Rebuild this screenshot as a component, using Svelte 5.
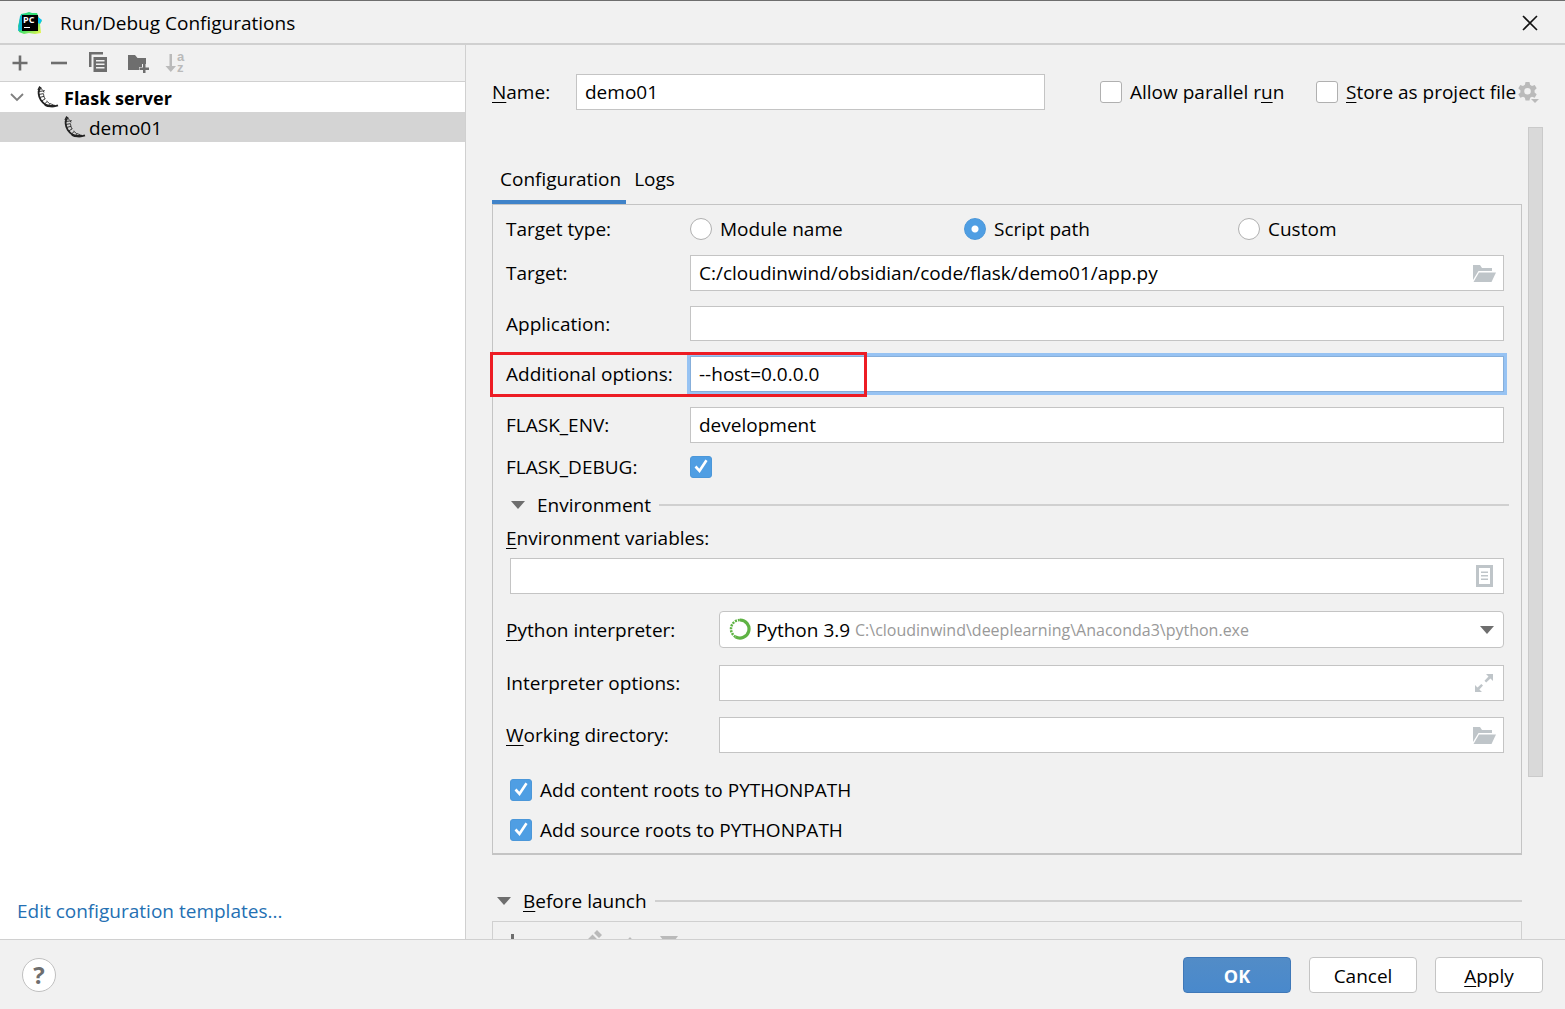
<script lang="ts">
  let name = $state("demo01");
  let targetType = $state("script");
  let target = $state("C:/cloudinwind/obsidian/code/flask/demo01/app.py");
  let options = $state("--host=0.0.0.0");
  let flaskEnv = $state("development");

  const targetTypes = [
    { key: "module", label: "Module name" },
    { key: "script", label: "Script path" },
    { key: "custom", label: "Custom" },
  ];
</script>

{#snippet flask()}
  <svg class="flask" width="24" height="24" viewBox="0 0 24 24" fill="none" stroke="#222" aria-hidden="true">
    <path d="M4 3.500C1.800 6 2.300 11 4.800 15c2.700 4 6.700 5.800 9.200 6.200 3 .4 6-.2 8-.9" stroke-width="1.800" />
    <path d="M4 3.500l2.500 1M7 5.500l1 2M7.500 9l.6 3 1 2M10.500 16l3 2.500 4 1.300" stroke-width=".8" />
    <path d="M2.800 6.500l6-.8M2.600 9.500l5-.9M3.500 12.500l4.500-1.200M5.500 16l3.800-2.200M8.500 19l2.800-2.600M12 21l2-2.500" stroke-width=".9" />
    <path d="M9 19.800c3 1.700 6 1.700 10 1" stroke-width="2.200" />
    <path d="M2 5l1.500-3 2 1.500" stroke-width="1.300" />
  </svg>
{/snippet}

{#snippet folder()}
  <svg class="field-icon" width="24" height="20" viewBox="0 0 24 20" fill="#bfc5c9" aria-hidden="true">
    <path d="M1 16V1h7l2 3h10v3H6.500L1 16z" />
    <path d="M7 8.500h17L19.500 18H1.500z" />
  </svg>
{/snippet}

{#snippet triangle()}
  <svg width="14" height="8" viewBox="0 0 14 8" fill="#6e6e6e" aria-hidden="true"><path d="M0 0h14L7 8z" /></svg>
{/snippet}

<div class="dialog">
  <header class="titlebar">
    <svg width="26" height="24" viewBox="0 0 26 24" aria-hidden="true">
      <defs>
        <linearGradient id="logo" x1="0" y1="0" x2="1" y2="1">
          <stop offset="0" stop-color="#21d789" />
          <stop offset=".5" stop-color="#3be06c" />
          <stop offset="1" stop-color="#fcf84a" />
        </linearGradient>
      </defs>
      <path d="M4 3l5-1 3-1 3 1h5l2 5 3 3-2 3 1 9-6 1-6-1-5 1-5-2-1-6z" fill="url(#logo)" />
      <path d="M3 5l4-2-2 8v8l-4 1z" fill="#12b6cf" />
      <path d="M21 6l4 3-2 4-2-1z" fill="#07c3f2" />
      <rect x="5" y="4" width="16" height="16" fill="#000" />
      <text x="6" y="12" font-size="9" font-weight="700" fill="#fff" font-family="Open Sans, sans-serif">PC</text>
      <rect x="7" y="16" width="6" height="1" fill="#fff" />
    </svg>
    <h1>Run/Debug Configurations</h1>
    <button class="icon-button" aria-label="Close">
      <svg width="16" height="16" viewBox="0 0 16 16" stroke="#111" stroke-width="1.600"><path d="M1 1l14 14M15 1L1 15" /></svg>
    </button>
  </header>

  <div class="body">
    <aside class="sidebar">
      <div class="toolbar">
        <button class="icon-button" aria-label="Add">
          <svg width="16" height="16" viewBox="0 0 16 16" fill="#6e6e6e"><path d="M6.700.5h2.600v6.200h6.200v2.600H9.300v6.200H6.700V9.300H.5V6.700h6.200z" /></svg>
        </button>
        <button class="icon-button" aria-label="Remove">
          <svg width="16" height="16" viewBox="0 0 16 16" fill="#6e6e6e"><path d="M0 6.700h16v2.600H0z" /></svg>
        </button>
        <button class="icon-button" aria-label="Copy">
          <svg width="20" height="22" viewBox="0 0 20 22" fill="#6e6e6e">
            <path d="M1 0h14v2.500H3.500V15H1z" />
            <path fill-rule="evenodd" d="M5.500 5H19v15H5.500zM8 8v1.500h8.500V8zm0 3.500V13h8.500v-1.500zM8 15v1.500h8.500V15z" />
          </svg>
        </button>
        <button class="icon-button" aria-label="New folder">
          <svg width="22" height="20" viewBox="0 0 22 20" fill="#6e6e6e">
            <path d="M1 2h7l2.500 3H19v6h-4v3h-3v3H1z" />
            <path d="M16 11h2.500v3.500H22V17h-3.500v3.500H16V17h-3.500v-2.500H16z" />
          </svg>
        </button>
        <button class="icon-button sort" aria-label="Sort alphabetically" disabled>
          <svg width="22" height="26" viewBox="0 0 22 26" fill="#bababa">
            <path d="M4.500 4H7v12h4l-5.200 6L.5 16h4z" />
            <text x="12" y="11" font-size="13" font-weight="700" font-family="Liberation Sans, sans-serif">a</text>
            <text x="12" y="22" font-size="13" font-weight="700" font-family="Liberation Sans, sans-serif">z</text>
          </svg>
        </button>
      </div>
      <ul class="tree">
        <li class="group">
          <svg width="14" height="9" viewBox="0 0 14 9" fill="none" stroke="#7f7f7f" stroke-width="1.800" aria-hidden="true"><path d="M1 1l6 6 6-6" /></svg>
          {@render flask()}
          <span>Flask server</span>
        </li>
        <li class="item selected">
          {@render flask()}
          <span>demo01</span>
        </li>
      </ul>
      <a class="templates" href="#templates">Edit configuration templates...</a>
    </aside>

    <main class="editor">
      <div class="name-row">
        <label for="name"><u>N</u>ame:</label>
        <div class="name-field"><input id="name" type="text" bind:value={name} /></div>
        <label class="check"><input type="checkbox" /><span>Allow parallel r<u>u</u>n</span></label>
        <div class="store">
          <label class="check"><input type="checkbox" /><span><u>S</u>tore as project file</span></label>
          <button class="icon-button" aria-label="Storage settings">
            <svg width="22" height="22" viewBox="0 0 22 22" fill="#bababa">
              <path fill-rule="evenodd" d="M7.500 1h4l.6 2.800 1.900 1.100 2.700-1 2 3.400-2.100 1.900v2.200l2.100 1.900-2 3.400-2.700-1-1.900 1.100-.6 2.800h-4l-.6-2.800L5 15.700l-2.700 1-2-3.400 2.100-1.900V9.200L.3 7.300l2-3.400 2.700 1 1.900-1.100zM9.500 7a3.300 3.300 0 1 0 0 6.600 3.300 3.300 0 0 0 0-6.600z" />
              <path d="M12 17h10l-5 5z" fill="#f1f1f1" />
              <path d="M13 18h8l-4 4z" />
            </svg>
          </button>
        </div>
      </div>

      <div class="viewport">
        <div class="content">
          <div class="tabs" role="tablist">
            <button role="tab" class="tab active" aria-selected="true">Configuration</button>
            <button role="tab" class="tab" aria-selected="false">Logs</button>
          </div>

          <section class="panel">
            <div class="row types" role="radiogroup" aria-label="Target type">
              <span>Target type:</span>
              <div class="radios">
                {#each targetTypes as type}
                  <label class="check">
                    <input type="radio" name="target-type" value={type.key} bind:group={targetType} />
                    <span>{type.label}</span>
                  </label>
                {/each}
              </div>
            </div>
            <div class="row target">
              <label for="target">Target:</label>
              <div class="field"><input id="target" type="text" bind:value={target} />{@render folder()}</div>
            </div>
            <div class="row">
              <label for="application">Application:</label>
              <input id="application" class="short" type="text" />
            </div>
            <div class="row marked">
              <label for="options">Additional options:</label>
              <input id="options" class="focused" type="text" bind:value={options} />
            </div>
            <div class="row">
              <label for="env">FLASK_ENV:</label>
              <input id="env" type="text" bind:value={flaskEnv} />
            </div>
            <div class="row debug">
              <label for="debug">FLASK_DEBUG:</label>
              <input id="debug" type="checkbox" checked />
            </div>

            <div class="separator environment">{@render triangle()}<h2>Environment</h2></div>

            <label class="variables-label" for="variables"><u>E</u>nvironment variables:</label>
            <div class="field variables">
              <input id="variables" type="text" />
              <svg class="field-icon list-icon" width="17" height="22" viewBox="0 0 17 22" fill="#bfc5c9" aria-hidden="true">
                <path fill-rule="evenodd" d="M0 0h17v22H0zM3 3v16h11V3z" />
                <path d="M5 6.500h7V8H5zM5 10h7v1.500H5zM5 13.500h7V15H5z" />
              </svg>
            </div>

            <div class="row wide">
              <label for="interpreter"><u>P</u>ython interpreter:</label>
              <div class="combo">
                <select id="interpreter"><option>Python 3.9</option></select>
                <svg class="ring" width="22" height="22" viewBox="0 0 22 22" fill="none" stroke="#5fb344" aria-hidden="true">
                  <path d="M11 2a9 9 0 1 1-4.500 16.800" stroke-width="3.200" />
                  <path d="M6.500 18.800A9 9 0 0 1 11 2" stroke-width="2.500" stroke-dasharray="2 1" />
                </svg>
                <span class="path">C:\cloudinwind\deeplearning\Anaconda3\python.exe</span>
                <span class="arrow">{@render triangle()}</span>
              </div>
            </div>
            <div class="row wide">
              <label for="interpreter-options">Interpreter options:</label>
              <div class="field">
                <input id="interpreter-options" type="text" />
                <svg class="field-icon" width="24" height="20" viewBox="0 0 24 20" fill="#bfc5c9" aria-hidden="true">
                  <path d="M14 0h7v7l-2.500-2.500-4.300 4-1.700-1.700 4-4.300zM3 18v-7l2.500 2.500 3.800-3.600 1.700 1.700-3.600 3.900L10 18z" />
                </svg>
              </div>
            </div>
            <div class="row wide directory">
              <label for="directory"><u>W</u>orking directory:</label>
              <div class="field"><input id="directory" type="text" />{@render folder()}</div>
            </div>

            <div class="roots">
              <label class="check"><input type="checkbox" checked /><span>Add content roots to PYTHONPATH</span></label>
              <label class="check"><input type="checkbox" checked /><span>Add source roots to PYTHONPATH</span></label>
            </div>
          </section>

          <div class="separator launch">{@render triangle()}<h2><u>B</u>efore launch</h2></div>
          <div class="tasks">
            <button class="icon-button" aria-label="Add task">
              <svg width="16" height="16" viewBox="0 0 16 16" fill="#6e6e6e"><path d="M6 0h3v7h7v3H9v6H6v-6H0V7h6z" /></svg>
            </button>
            <button class="icon-button" aria-label="Remove task" disabled>
              <svg width="16" height="2" viewBox="0 0 16 2" fill="#bababa"><path d="M0 0h16v2H0z" /></svg>
            </button>
            <button class="icon-button" aria-label="Edit task" disabled>
              <svg width="22" height="24" viewBox="0 0 22 24" fill="#bababa"><path d="M17 0l5 5-3 3-5-5zM12.500 4.500l5 5L6 21H1v-5z" /></svg>
            </button>
            <button class="icon-button" aria-label="Move up" disabled>
              <svg width="18" height="10" viewBox="0 0 18 10" fill="#bababa"><path d="M9 0l9 10H0z" /></svg>
            </button>
            <button class="icon-button" aria-label="Move down" disabled>
              <svg width="18" height="12" viewBox="0 0 18 12" fill="#bababa"><path d="M0 0h18L9 12z" /></svg>
            </button>
          </div>
        </div>
        <div class="scrollbar"></div>
      </div>
    </main>
  </div>

  <footer class="actions">
    <button class="help" aria-label="Help">?</button>
    <button class="button primary">OK</button>
    <button class="button">Cancel</button>
    <button class="button"><u>A</u>pply</button>
  </footer>
</div>

<style>
  :global(body) { margin: 0; }
  .dialog {
    display: flex;
    flex-direction: column;
    height: 100vh;
    box-sizing: border-box;
    border-top: 1px solid #6e6e6e;
    background: #f1f1f1;
    color: #000;
    font: 19px/24px "Open Sans", "Noto Sans", sans-serif;
  }
  .dialog *, .marked::after { box-sizing: border-box; }
  h1, h2 { margin: 0; font-size: inherit; font-weight: 400; }
  svg { display: block; flex: none; }
  u { text-underline-offset: 3px; text-decoration-thickness: 1px; text-decoration-skip-ink: none; }
  .icon-button {
    display: flex;
    align-items: center;
    justify-content: center;
    padding: 0;
    border: 0;
    background: none;
  }

  .titlebar {
    display: flex;
    align-items: center;
    height: 44px;
    padding: 2px 27px 0 17px;
    border-bottom: 2px solid #d0d0d0;
  }
  .titlebar h1 { flex: 1; padding-left: 17px; }
  .body { display: flex; flex: 1; min-height: 0; }

  /* Configuration tree */
  .sidebar {
    display: flex;
    flex-direction: column;
    flex: none;
    width: 466px;
    border-right: 1px solid #d0d0d0;
    background: #fff;
  }
  .toolbar {
    display: flex;
    align-items: center;
    gap: 19px;
    height: 37px;
    padding-left: 12px;
    border-bottom: 1px solid #d0d0d0;
    background: #f1f1f1;
  }
  .toolbar .icon-button:nth-child(2) { padding: 0 2px 0 4px; }
  .toolbar .sort { margin-left: -3px; }
  .tree { flex: 1; margin: 0; padding: 0; list-style: none; }
  .tree li { display: flex; align-items: center; height: 30px; }
  .tree span { padding-top: 2px; }
  .group { padding-left: 10px; font-size: 18px; font-weight: 700; }
  .group .flask { margin: 0 4px 0 12px; }
  .item { padding-left: 63px; }
  .item .flask { margin-right: 2px; }
  .selected { background: #d4d4d4; }
  .templates { padding: 0 17px 16px; color: #2470b3; text-decoration: none; }

  /* Text boxes, tick boxes and radios */
  input[type="text"], select {
    display: block;
    width: 100%;
    height: 36px;
    padding: 0 8px;
    border: 1px solid #c4c4c4;
    border-radius: 0;
    outline: 0;
    background: #fff;
    color: inherit;
    font: inherit;
  }
  input[type="text"].short { height: 35px; }
  input[type="text"].focused { border-color: #87afda; box-shadow: 0 0 0 3px #97c3f3; }
  input[type="checkbox"], input[type="radio"] {
    flex: none;
    appearance: none;
    width: 22px;
    height: 22px;
    margin: 0;
    border: 1px solid #b0b0b0;
    border-radius: 3px;
    background: #fff;
  }
  input[type="checkbox"]:checked {
    border-color: #4b97d9;
    background: #4f9ee3 url("data:image/svg+xml,%3Csvg xmlns='http://www.w3.org/2000/svg' viewBox='0 0 20 20' fill='none' stroke='white' stroke-width='2.600'%3E%3Cpath d='M4.500 9.500l4 4.300 7-10.500'/%3E%3C/svg%3E") center / 20px no-repeat;
  }
  input[type="radio"] { border-radius: 50%; }
  input[type="radio"]:checked {
    border-color: #4b97d9;
    background: radial-gradient(circle, #fff 0 3px, #4f9ee3 4px);
  }
  .check { display: flex; align-items: center; gap: 8px; white-space: nowrap; }
  .field { position: relative; flex: 1; }
  .field-icon { position: absolute; top: 9px; right: 8px; }
  .list-icon { top: 7px; right: 11px; }

  /* Right side */
  .editor { display: flex; flex-direction: column; flex: 1; min-width: 0; padding: 0 22px 0 26px; }
  .name-row {
    display: grid;
    grid-template-columns: 84px 1fr 216px 227px;
    align-items: center;
    flex: none;
    padding: 29px 0 17px;
  }
  .name-field { padding-right: 55px; }
  .store { display: flex; align-items: center; justify-content: space-between; padding-right: 3px; }
  .viewport {
    display: flex;
    flex: 1;
    gap: 6px;
    min-height: 0;
    overflow-x: visible;
    overflow-y: clip;
  }
  .content { flex: 1; min-width: 0; }
  .scrollbar { width: 15px; height: 80%; border: 1px solid #cacaca; background: #d9d9d9; }

  .tabs { display: flex; padding-top: 36px; }
  .tab {
    height: 41px;
    padding: 0 5px 5px 8px;
    border: 0;
    border-bottom: 4px solid transparent;
    background: none;
    color: inherit;
    font: inherit;
  }
  .tab.active { border-color: #4083c9; }
  .panel {
    display: flex;
    flex-direction: column;
    padding: 6px 17px 11px 13px;
    border: 1px solid #c4c4c4;
    border-bottom-width: 2px;
  }
  .row { display: grid; grid-template-columns: 184px 1fr; align-items: center; margin-top: 15px; }
  .row.types { height: 36px; margin-top: 0; }
  .row.target { margin-top: 8px; }
  .row.debug { margin-top: 12px; }
  .row.wide { grid-template-columns: 213px 1fr; margin-top: 17px; }
  .row.directory { margin-top: 16px; }
  .radios { display: grid; grid-template-columns: 1fr 1fr 1fr; margin-right: -8px; }
  /* Red callout round the option that has to be changed */
  .marked { position: relative; }
  .marked::after {
    content: "";
    position: absolute;
    top: -4px;
    left: -16px;
    width: 377px;
    height: 45px;
    border: 3px solid #ed1c24;
    pointer-events: none;
  }

  .separator { display: flex; align-items: center; gap: 12px; }
  .separator::after { content: ""; flex: 1; height: 2px; margin-left: -4px; background: #d0d0d0; }
  .environment { margin: 14px -5px 0 5px; }
  .variables-label { margin-top: 9px; }
  .variables { flex: none; margin: 8px 0 0 4px; }
  .combo { position: relative; }
  .combo select { appearance: none; height: 37px; padding-left: 36px; border-radius: 4px; }
  .ring { position: absolute; top: 7px; left: 10px; }
  .path { position: absolute; top: 7px; left: 136px; color: #999; font-size: 16px; }
  .arrow { position: absolute; top: 15px; right: 10px; }
  .roots { display: flex; flex-direction: column; gap: 16px; margin: 25px 0 0 4px; }

  .launch { margin: 34px 0 8px 5px; }
  .tasks {
    display: flex;
    align-items: flex-start;
    gap: 19px;
    height: 120px;
    padding: 8px 10px;
    border: 1px solid #d0d0d0;
  }
  .tasks .icon-button { width: 20px; height: 24px; }

  .actions {
    display: flex;
    align-items: center;
    gap: 18px;
    flex: none;
    height: 70px;
    padding: 0 22px;
    border-top: 1px solid #d0d0d0;
  }
  .help {
    width: 34px;
    height: 34px;
    margin-right: auto;
    padding: 0;
    border: 1px solid #c0c0c0;
    border-radius: 50%;
    background: #fff;
    color: #6e6e6e;
    font: 700 24px/30px "Open Sans", sans-serif;
  }
  .button {
    width: 108px;
    height: 36px;
    padding: 2px 0 0;
    border: 1px solid #c4c4c4;
    border-radius: 4px;
    background: #fff;
    color: inherit;
    font: inherit;
  }
  .primary {
    border-color: #3f78b8;
    background: linear-gradient(#528cc7, #4989cc);
    color: #fff;
    font-size: 18px;
    font-weight: 700;
  }
</style>
